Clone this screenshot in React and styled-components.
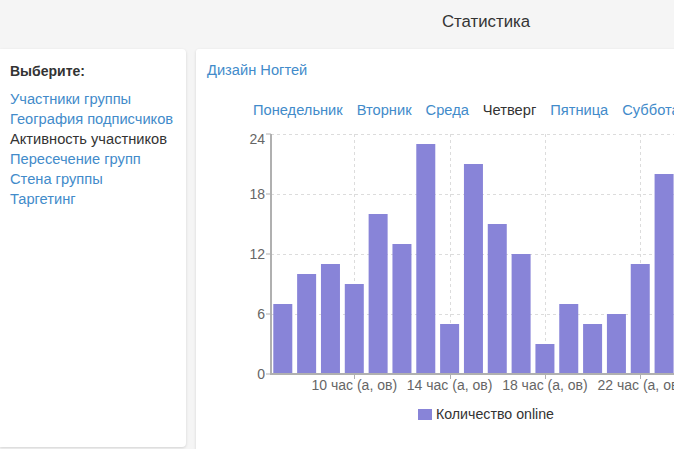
import React from "react";
import styled, { createGlobalStyle } from "styled-components";

const colors = {
  page: "#f5f5f5",
  text: "#333",
  link: "#428bca",
  bar: "#8884d8",
  grid: "#dcdcdc",
  axis: "#b0b0b0",
  tick: "#666",
};

const GlobalStyle = createGlobalStyle`
  body {
    margin: 0;
    background: ${colors.page};
    font-family: "Liberation Sans", Arial, sans-serif;
    font-size: 11pt;
    line-height: 20px;
    color: ${colors.text};
    overflow: hidden;
  }
`;

const Page = styled.div`
  width: 972px;
`;

const Header = styled.header`
  height: 49px;
  box-sizing: border-box;
  padding-top: 11px;
  text-align: center;
  font-size: 16.8px;
  line-height: 22px;
`;

const Columns = styled.div`
  display: flex;
  align-items: flex-start;
  gap: 10px;
`;

const Sidebar = styled.aside`
  flex: 0 0 186px;
  box-sizing: border-box;
  height: 398px;
  padding: 12px 10px;
  background: white;
  border-radius: 0 4px 4px 0;
  box-shadow: 0 1px 3px rgba(0, 0, 0, 0.14);

  & > h5 {
    margin: 0 0 8px;
    font-size: 14px;
    font-weight: bold;
  }
`;

const MenuItem = styled.div`
  color: ${({ $active }) => ($active ? colors.text : colors.link)};
  white-space: nowrap;
`;

const Main = styled.main`
  flex: 0 0 580px;
  min-width: 0;
  box-sizing: border-box;
  min-height: 410px;
  padding: 11px 11px 0;
  background: white;
  border-radius: 3px 3px 0 0;
  box-shadow: 0 1px 3px rgba(0, 0, 0, 0.14);
`;

const GroupTitle = styled.div`
  color: ${colors.link};
`;

const Tabs = styled.nav`
  display: flex;
  gap: 14px;
  margin: 20px 0 0 46px;
  white-space: nowrap;
  overflow: hidden;
`;

const Tab = styled.span`
  flex: none;
  color: ${({ $active }) => ($active ? colors.text : colors.link)};
`;

const ChartSvg = styled.svg`
  display: block;
  margin-top: 4px;
  font-family: "Liberation Sans", Arial, sans-serif;
  font-size: 14px;
`;

const Legend = styled.div`
  display: flex;
  justify-content: center;
  align-items: center;
  gap: 4px;
  font-size: 14.2px;
`;

const Swatch = styled.span`
  width: 14px;
  height: 11px;
  background: ${colors.bar};
`;

const menu = [
  "Участники группы",
  "География подписчиков",
  "Активность участников",
  "Пересечение групп",
  "Стена группы",
  "Таргетинг",
];

const days = ["Понедельник", "Вторник", "Среда", "Четверг", "Пятница", "Суббота", "Воскресенье"];

// online count per hour, starting at 7:00
const values = [7, 10, 11, 9, 16, 13, 23, 5, 21, 15, 12, 3, 7, 5, 6, 11, 20, 17, 14, 9];

const W = 558;
const H = 280;
const axisX = 64;
const zeroY = 250;
const unit = 10;
const step = 23.83;
const barW = 19;
const firstBar = 66.3;
const firstHour = 7;

const Chart = () => {
  const yTicks = [0, 6, 12, 18, 24];
  const hourTicks = [10, 14, 18, 22, 26];
  const hx = (h) => firstBar + (h - firstHour) * step + barW / 2;

  return (
    <ChartSvg width={W} height={H}>
      {yTicks.filter((v) => v > 0).map((v) => (
        <line key={v} x1={axisX} x2={W} y1={zeroY - v * unit + 0.5} y2={zeroY - v * unit + 0.5}
          stroke={colors.grid} strokeDasharray="3 3" />
      ))}
      {hourTicks.map((h) => (
        <line key={h} x1={Math.round(hx(h)) + 0.5} x2={Math.round(hx(h)) + 0.5} y1={zeroY - 240} y2={zeroY}
          stroke={colors.grid} strokeDasharray="3 3" />
      ))}
      {values.map((v, i) => (
        <rect key={i} x={firstBar + i * step} y={zeroY - v * unit} width={barW} height={v * unit} fill={colors.bar} />
      ))}
      <line x1={axisX} x2={axisX} y1={zeroY - 240} y2={zeroY + 1} stroke={colors.axis} strokeWidth="2" />
      <line x1={axisX - 1} x2={W} y1={zeroY} y2={zeroY} stroke={colors.axis} strokeWidth="2" />
      {yTicks.map((v) => (
        <g key={v}>
          <line x1={axisX - 5} x2={axisX} y1={zeroY - v * unit} y2={zeroY - v * unit} stroke={colors.axis} />
          <text x={axisX - 6} y={zeroY - v * unit + (v === 24 ? 10 : 5)} textAnchor="end" fill={colors.tick}>
            {v}
          </text>
        </g>
      ))}
      {hourTicks.map((h) => (
        <g key={h}>
          <line x1={Math.round(hx(h)) + 0.5} x2={Math.round(hx(h)) + 0.5} y1={zeroY} y2={zeroY + 5} stroke={colors.axis} />
          <text x={hx(h)} y={zeroY + 16} textAnchor="middle" fill={colors.tick}>
            {`${h % 24} час (а, ов)`}
          </text>
        </g>
      ))}
    </ChartSvg>
  );
};

export default function App() {
  return (
    <Page>
      <GlobalStyle />
      <Header>Статистика</Header>
      <Columns>
        <Sidebar>
          <h5>Выберите:</h5>
          {menu.map((item) => (
            <MenuItem key={item} $active={item === "Активность участников"}>
              {item}
            </MenuItem>
          ))}
        </Sidebar>
        <Main>
          <GroupTitle>Дизайн Ногтей</GroupTitle>
          <Tabs>
            {days.map((d) => (
              <Tab key={d} $active={d === "Четверг"}>
                {d}
              </Tab>
            ))}
          </Tabs>
          <Chart />
          <Legend>
            <Swatch />
            Количество online
          </Legend>
        </Main>
      </Columns>
    </Page>
  );
}
